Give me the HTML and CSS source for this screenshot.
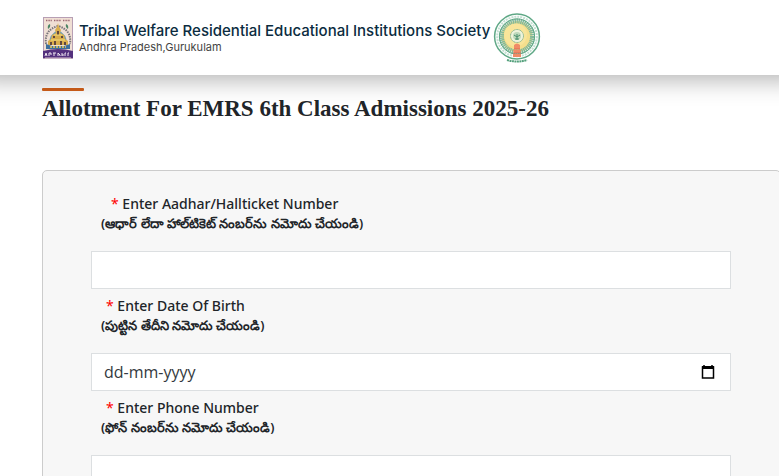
FILE: index.html
```html
<!DOCTYPE html>
<html lang="en">
<head>
<meta charset="utf-8">
<meta name="viewport" content="width=device-width, initial-scale=1">
<title>EMRS Admissions</title>
<link rel="stylesheet" href="styles.css">
</head>
<body>
<header class="site-header">
  <svg class="logo" viewBox="0 0 30 42" aria-hidden="true">
    <rect width="30" height="42" fill="#b79fb4"/>
    <rect x="1" y="1" width="28" height="35" fill="#f0dfd4"/>
    <path d="M3 3.5h6m2 0h7m2 0h7" stroke="#9b6570" stroke-width="1.5" stroke-dasharray="1 .6"/>
    <path d="M5 12q-1-4 2-5 1 3-2 5zm20 0q1-4-2-5-1 3 2 5z" fill="#4b8565"/>
    <path d="M3 27Q1 13 15 9q14 4 12 18" fill="none" stroke="#79757b" stroke-width="2" stroke-dasharray="1.5 1"/>
    <path d="M6 27q0-10 9-14 9 4 9 14z" fill="#6e9eb4"/>
    <path d="M15 6l1 4 2 3-1 3 4 2 1 4 3 2v4H5v-4l3-2 1-4 4-2-1-3 2-3z" fill="#d9ae4c"/>
    <path d="M11 19v2m4-7v4m4 1v2M8 25v3m4-4v4m6-4v4m4-3v3" stroke="#62483e" stroke-width="2"/>
    <path d="M8 23h14M11 18h8" stroke="#f2dc7c"/>
    <path d="M3 27l6 2h12l6-2v5H3z" fill="#3f6f9c"/>
    <path d="M7 30h16" stroke="#efce59" stroke-width="1.5" stroke-dasharray="2 1"/>
    <path d="M0 34q15-4 30 0v7H0z" fill="#54317d"/>
    <path d="M2 39l1-3 1 3m2 0v-3h2v2m2-2h3m-2 0v3m4 0v-3l2 2v1m2-3v3m0-1h2m2-2h-1v3m4-3h-1v3" fill="none" stroke="#eee6f0"/>
    <path d="M2 41h26" stroke="#d8c5cf"/>
  </svg>
  <div class="brand">
    <a class="brand-name" href="#">Tribal Welfare Residential Educational Institutions Society</a>
    <span class="brand-place">Andhra Pradesh,Gurukulam</span>
  </div>
  <svg class="emblem" viewBox="0 0 48 50" fill="none" aria-hidden="true">
    <circle cx="24" cy="23.5" r="22.4" fill="#fff" stroke="#5fa886" stroke-width="1.5"/>
    <circle cx="24" cy="23.5" r="19.8" stroke="#c4e0d2" stroke-width="2" stroke-dasharray="2 1"/>
    <circle cx="24" cy="23.5" r="15.5" fill="#f5df8c" stroke="#83b99a" stroke-width="5" stroke-dasharray="1.5 .5"/>
    <circle cx="24" cy="23.5" r="17.6" stroke="#5fa886"/>
    <circle cx="22.5" cy="22" r="11.5" fill="#f8e59a"/>
    <circle cx="24" cy="23" r="6.5" fill="#eef3dc" stroke="#77ac8a" stroke-dasharray="1 .5"/>
    <circle cx="24" cy="23" r="4" fill="#bed9bc"/>
    <path d="M24 27v-6m-3 1l3 2 3-2m-5 4h4" stroke="#478d6a"/>
    <path d="M21 32q3-3 6 0v4h-6zm-1 5h8l-1 3h-6zm0 4h8v3h-8z" fill="#f08b66"/>
    <path d="M21 36h6m-7 4h8" stroke="#e2694f"/>
    <path d="M14 47q10 3 20 0" stroke="#55a17d" stroke-width="2" stroke-dasharray="2 .5"/>
  </svg>
</header>
<main class="page">
  <h1 class="title">Allotment For EMRS 6th Class Admissions 2025-26</h1>
  <form class="card">
    <div class="field">
      <label class="label label-first" for="hallticket"><span class="label-main"><span class="star">*</span> Enter Aadhar/Hallticket Number</span><span class="telugu" lang="te">(ఆధార్ లేదా హాల్‌టికెట్ నంబర్‌ను నమోదు చేయండి)</span></label>
      <input class="input" id="hallticket" type="text">
    </div>
    <div class="field">
      <label class="label" for="birth"><span class="label-main"><span class="star">*</span> Enter Date Of Birth</span><span class="telugu" lang="te">(పుట్టిన తేదీని నమోదు చేయండి)</span></label>
      <div class="date">
        <input class="input" id="birth" type="text" placeholder="dd-mm-yyyy">
        <button class="picker" type="button" aria-label="Show date picker">
          <svg viewBox="0 0 14 16" aria-hidden="true"><path d="M3 1v2m8-2v2" stroke="#000" stroke-width="1.5"/><path d="M1.5 3h11v11h-11z" fill="none" stroke="#000" stroke-width="1.5"/><path d="M1 2h12v3H1z"/></svg>
        </button>
      </div>
    </div>
    <div class="field">
      <label class="label" for="phone"><span class="label-main"><span class="star">*</span> Enter Phone Number</span><span class="telugu" lang="te">(ఫోన్ నంబర్‌ను నమోదు చేయండి)</span></label>
      <input class="input" id="phone" type="tel">
    </div>
  </form>
</main>
</body>
</html>
```
FILE: styles.css
```css
* { box-sizing: border-box; }
html { overflow: hidden; }
body {
  margin: 0;
  background: #fff;
  color: #212529;
  font-family: "Noto Sans", "Open Sans", sans-serif;
}
.site-header {
  position: relative;
  display: flex;
  align-items: center;
  height: 75px;
  padding: 0 43px;
  background: #fff;
  box-shadow: 0 -20px 24px 24px rgba(0, 0, 0, 0.32);
}
.logo { width: 30px; height: 42px; margin-right: 6px; }
.emblem { width: 48px; height: 50px; margin-left: 3px; }
.brand { display: flex; flex-direction: column; font-family: Inter, sans-serif; white-space: nowrap; }
.brand-name {
  color: #0b2c40;
  font-size: 15px;
  font-weight: 500;
  line-height: 18px;
  text-decoration: none;
}
.brand-place { color: #444; font-size: 11px; line-height: 14px; }
.page { padding: 13px 0 0 42px; }
.title {
  margin: 0;
  color: #212529;
  font-family: "Liberation Serif", serif;
  font-size: 23px;
  font-weight: 700;
  line-height: 36px;
}
.title::before {
  content: "";
  display: block;
  width: 42px;
  height: 3px;
  border-radius: 1px;
  background: #d2601a;
}
.card {
  margin: 43px -2px 0 0;
  padding: 22px 49px 22px 48px;
  background: #f7f7f7;
  border: 1px solid #ccc;
  border-radius: 5px;
}
.label {
  display: flex;
  flex-direction: column;
  height: 58px;
  padding-left: 10px;
  font-weight: 500;
}
.label-main { padding-left: 5px; font-size: 14px; line-height: 22px; }
.label-first .label-main { padding-left: 10px; }
.star { color: #f00; font-weight: 400; }
.telugu { font-size: 13px; line-height: 16px; font-weight: 600; }
.field { padding-bottom: 6px; }
.input {
  display: block;
  width: 100%;
  height: 38px;
  padding: 6px 12px;
  background: #fff;
  border: 1px solid #dcdfe1;
  border-radius: 0;
  color: #212529;
  font: 16px/24px "Open Sans", "Noto Sans", sans-serif;
}
.input::placeholder { color: #34393e; opacity: 1; }
.date { position: relative; }
.picker {
  position: absolute;
  top: 11px;
  right: 16px;
  width: 14px;
  height: 16px;
  padding: 0;
  border: 0;
  background: none;
}
.picker svg { display: block; width: 14px; height: 16px; }
```
